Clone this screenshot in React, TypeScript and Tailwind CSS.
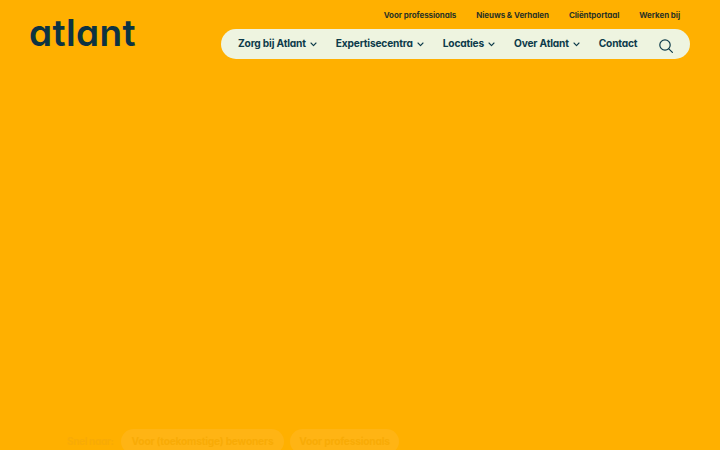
export default function App() {
  const ff = "[font-family:Inter,'Liberation_Sans',sans-serif] [font-feature-settings:'cv11','ss03']";
  const Chevron = () => (
    <svg width="7" height="5" viewBox="0 0 7 5" fill="none" stroke="#0d3b4a" strokeWidth="1.1" strokeLinecap="round" strokeLinejoin="round" className="ml-[4px] mt-[1px] shrink-0">
      <path d="M1 1 L3.5 3.6 L6 1" />
    </svg>
  );
  return (
    <div className={"h-[450px] w-[720px] overflow-hidden bg-[#ffb000] flex flex-col " + ff}>
      <header className="flex shrink-0 items-start justify-between pl-[29px] pr-[30px] h-[429px]">
        <div className="mt-[11px] text-[37px] leading-[44px] font-semibold tracking-[0.01em] text-[#0d3342]">atlant</div>
        <div className="flex flex-col items-end">
          <nav className="flex gap-[20px] pr-[10px] pt-[9px] h-[29px] text-[8px] leading-[12px] font-bold tracking-[-0.01em] whitespace-nowrap text-[#2c3324]">
            <a>Voor professionals</a>
            <a>Nieuws &amp; Verhalen</a>
            <a>Cliëntportaal</a>
            <a>Werken bij</a>
          </nav>
          <nav className="flex items-center w-[469px] h-[30px] rounded-full bg-[#eef4e0] pl-[17px] pr-[17px] text-[#0d3b4a] text-[10.2px] tracking-[-0.18px] whitespace-nowrap font-bold">
            <a className="flex items-center">Zorg bij Atlant<Chevron /></a>
            <a className="flex items-center ml-[19px]">Expertisecentra<Chevron /></a>
            <a className="flex items-center ml-[19px]">Locaties<Chevron /></a>
            <a className="flex items-center ml-[19px]">Over Atlant<Chevron /></a>
            <a className="ml-[19px]">Contact</a>
            <svg width="14" height="14" viewBox="0 0 14 14" fill="none" stroke="#0d3b4a" strokeWidth="1.2" strokeLinecap="round" className="ml-auto mt-[3px]">
              <circle cx="6" cy="6" r="5.2" />
              <path d="M9.8 9.8 L13.4 13.4" />
            </svg>
          </nav>
        </div>
      </header>
      <div className="flex items-center gap-[6px] pl-[67px] h-[25px] shrink-0 text-[10.2px] tracking-[-0.2px] whitespace-nowrap font-bold text-[#f8ab06]">
        <span className="mr-[3px] w-[45px] text-[10px] tracking-[-0.35px]">Snel naar:</span>
        <span className="flex items-center h-[25px] w-[163px] justify-center rounded-full bg-[#ffb414]">Voor (toekomstige) bewoners</span>
        <span className="flex items-center h-[25px] w-[109px] justify-center rounded-full bg-[#ffb414]">Voor professionals</span>
      </div>
    </div>
  );
}
